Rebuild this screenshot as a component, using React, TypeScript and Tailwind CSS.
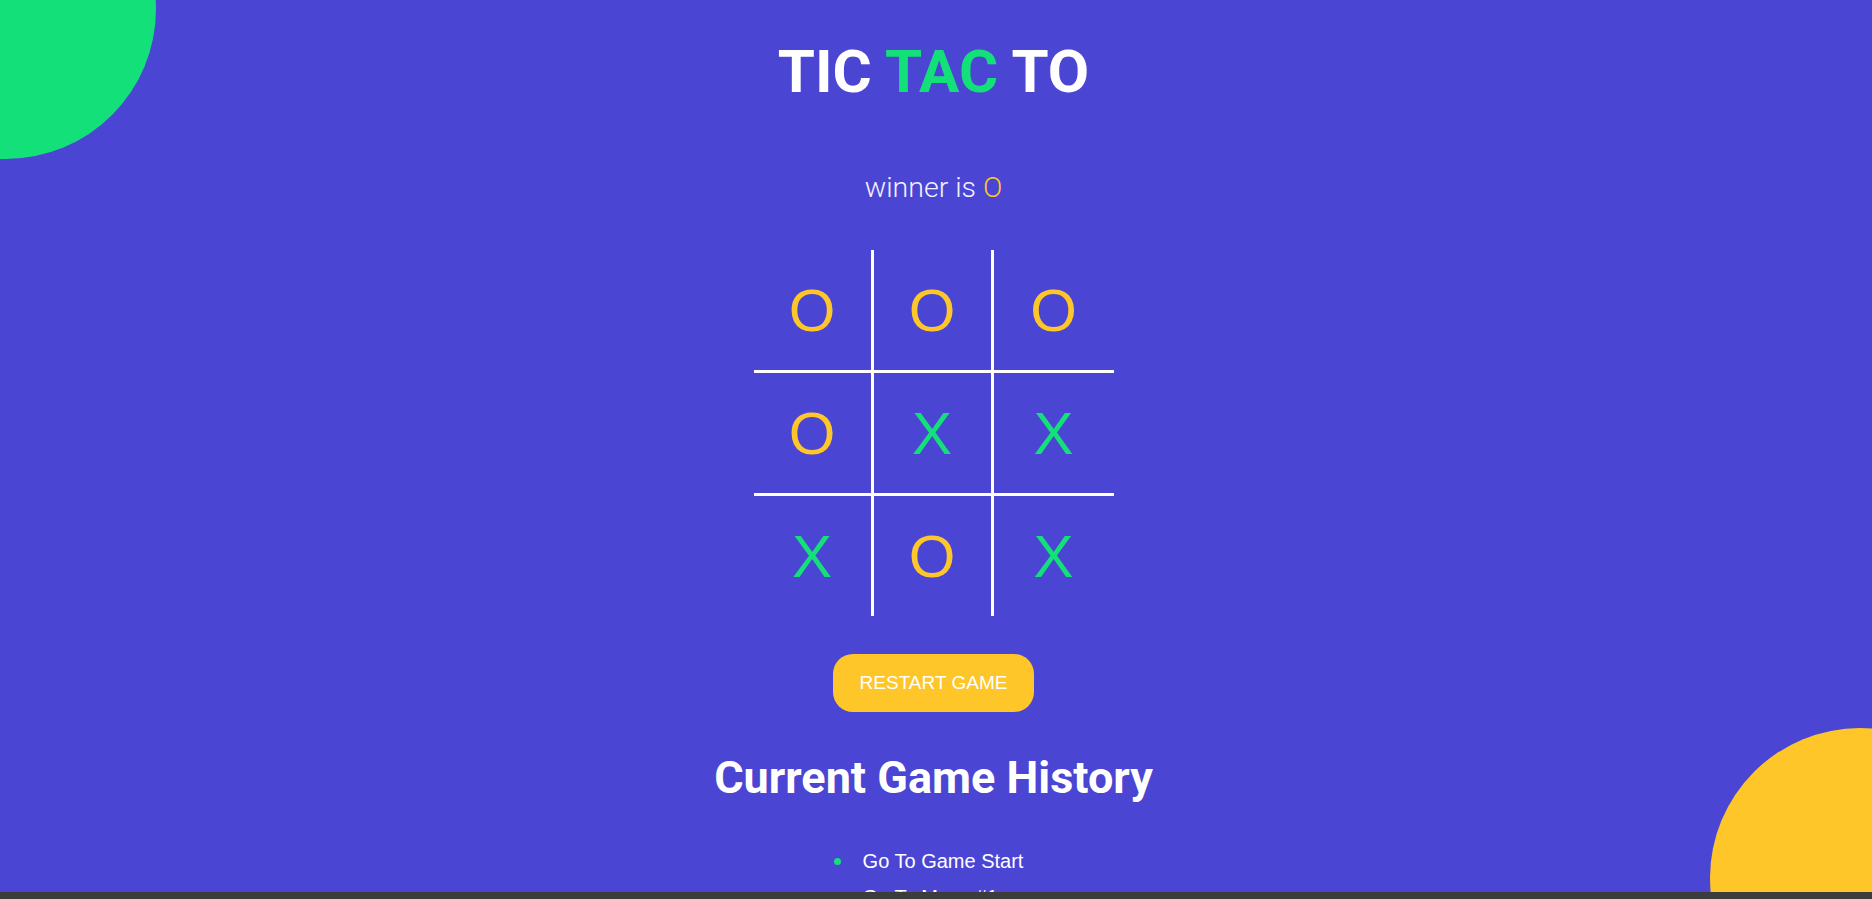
import React from "react";

const board: string[] = ["O", "O", "O", "O", "X", "X", "X", "O", "X"];
const moves: string[] = [
  "Go To Game Start",
  "Go To Move #1",
  "Go To Move #2",
  "Go To Move #3",
  "Go To Move #4",
  "Go To Move #5",
  "Go To Move #6",
  "Go To Move #7",
  "Go To Move #8",
];

function Cell({ value, index }: { value: string; index: number }) {
  const col = index % 3;
  const row = Math.floor(index / 3);
  const cls = [
    "flex items-center justify-center pt-[2px] text-[60px] leading-none",
    col < 2 ? "border-r-[3px] border-white" : "",
    row < 2 ? "border-b-[3px] border-white" : "",
    value === "O" ? "text-[#ffc62a]" : "text-[#14e07a]",
  ].join(" ");
  return (
    <div className={cls} style={{ fontFamily: '"Liberation Sans", Arial, sans-serif' }}>
      {value}
    </div>
  );
}

export default function App() {
  return (
    <div
      className="relative min-h-screen h-[899px] overflow-hidden bg-[#4b45d4] text-white"
      style={{ fontFamily: "Roboto, 'Liberation Sans', sans-serif" }}
    >
      <div className="absolute left-[-144px] top-[-141px] h-[300px] w-[300px] rounded-full bg-[#14e07a]" />
      <div className="absolute left-[1710px] top-[728px] h-[300px] w-[300px] rounded-full bg-[#ffc62a]" />

      <div className="relative flex flex-col items-center pr-[5px] pt-[42px]">
        <h1 className="text-[60px] font-bold leading-[60px]">
          TIC <span className="text-[#14e07a]">TAC</span> TO
        </h1>

        <p className="mt-[72px] text-[28.5px] font-light leading-[27px] text-[#f2f2ff]">
          winner is <span className="text-[#ffc62a]">O</span>
        </p>

        <div className="mt-[49px] grid grid-cols-[120px_120px_120px] grid-rows-[123px_123px_120px]">
          {board.map((v, i) => (
            <Cell key={i} value={v} index={i} />
          ))}
        </div>

        <button
          className="mt-[38px] flex h-[58px] items-center justify-center rounded-[20px] bg-[#ffc62a] px-[27px] text-[19px] text-white"
          style={{ fontFamily: '"Liberation Sans", Arial, sans-serif' }}
        >
          RESTART GAME
        </button>

        <h2 className="mt-[43px] text-[45px] font-bold leading-[45px]">Current Game History</h2>

        <ul
          className="mt-[43px] flex flex-col pr-[10px] text-[20px] leading-[36px]"
          style={{ fontFamily: '"Liberation Sans", Arial, sans-serif' }}
        >
          {moves.map((m) => (
            <li key={m} className="flex items-center gap-[22px]">
              <span className="h-[7px] w-[7px] rounded-full bg-[#14e07a]" />
              <span>{m}</span>
            </li>
          ))}
        </ul>
      </div>

      <div className="fixed bottom-0 left-0 right-0 h-[7px] bg-[#3c3c3c]" />
    </div>
  );
}
